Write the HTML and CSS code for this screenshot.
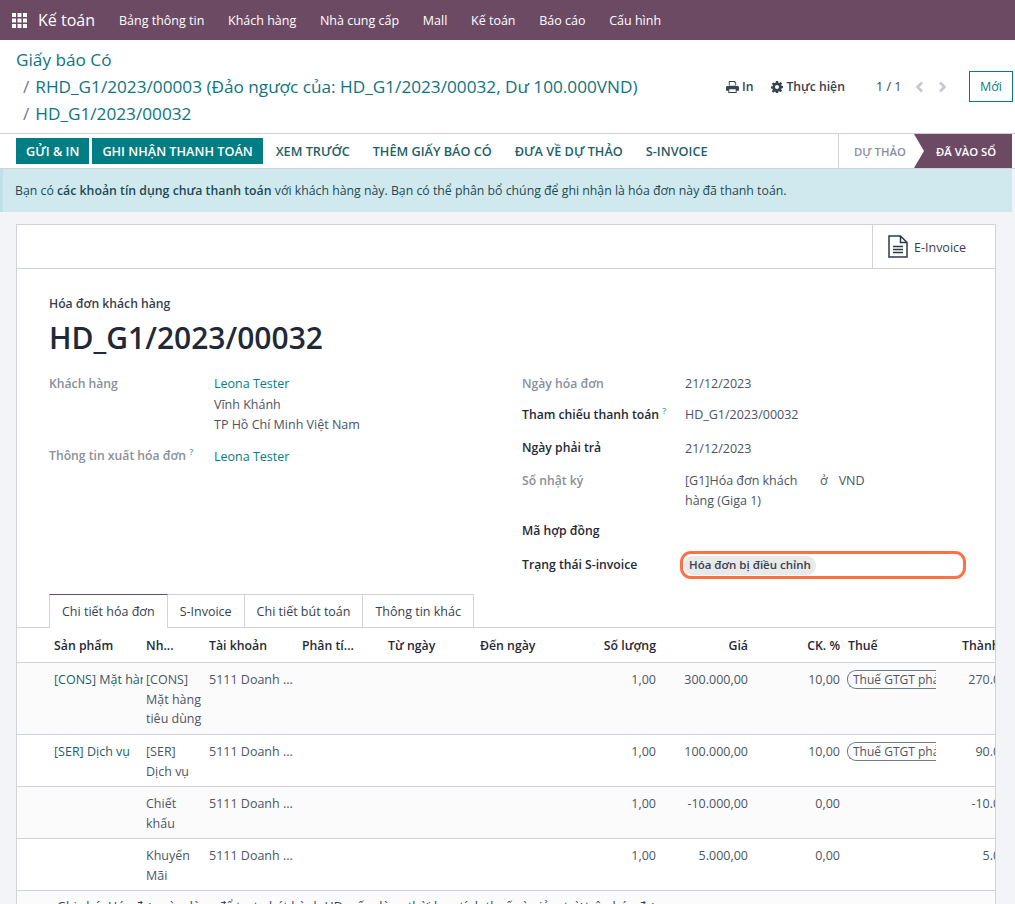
FILE: index.html
```html
<!DOCTYPE html>
<html>
<head>
  <meta charset="utf-8">
  <link rel="stylesheet" href="styles.css">
</head>
<body>
  <nav class="navbar">
    <svg class="apps-icon" width="15" height="15" viewBox="0 0 15 15">
      <path fill="#fff" d="M0 0h4v4H0zM5.500 0h4v4h-4zM11 0h4v4h-4zM0 5.500h4v4H0zM5.500 5.500h4v4h-4zM11 5.500h4v4h-4zM0 11h4v4H0zM5.500 11h4v4h-4zM11 11h4v4h-4z"/>
    </svg>
    <span class="brand">Kế toán</span>
    <a>Bảng thông tin</a>
    <a>Khách hàng</a>
    <a>Nhà cung cấp</a>
    <a>Mall</a>
    <a>Kế toán</a>
    <a>Báo cáo</a>
    <a>Cấu hình</a>
  </nav>

  <header class="control-panel">
    <div class="breadcrumb">
      <div class="crumb">Giấy báo Có</div>
      <div class="crumb sub"><span class="slash">/</span>RHD_G1/2023/00003 (Đảo ngược của: HD_G1/2023/00032, Dư 100.000VND)</div>
      <div class="crumb sub"><span class="slash">/</span>HD_G1/2023/00032</div>
    </div>
    <div class="actions">
      <span class="action">
        <svg width="13" height="12" viewBox="0 0 14 13"><path fill="#374151" d="M3 0h6.500L11 1.500V5H3zM4 1v3.500h6V2H9V1zM1.500 5.500h11c.8 0 1.500.7 1.500 1.500v3.500h-2.500V13h-9v-2.500H0V7c0-.8.7-1.500 1.500-1.500zM3.500 9v3h7V9z"/></svg>
        In
      </span>
      <span class="action">
        <svg width="12" height="12" viewBox="0 0 13 13"><path fill="#374151" fill-rule="evenodd" d="M5.300 0h2.400l.3 1.800 1 .4L10.600 1l1.500 1.500-1.100 1.600.4 1 1.600.3v2.300l-1.700.3-.4 1 1.100 1.500-1.600 1.600-1.500-1.100-1 .4-.3 1.600H5.300L5 11.900l-1-.4L2.500 12.600.9 11l1.100-1.500-.4-1L0 8.200V5.900l1.700-.3.4-1L1 3l1.500-1.500L4 2.200l1-.4zM6.500 4.300a2.200 2.200 0 1 0 0 4.400 2.200 2.200 0 0 0 0-4.400z"/></svg>
        Thực hiện
      </span>
    </div>
    <div class="pager">
      <span>1 / 1</span>
      <svg width="9" height="12" viewBox="0 0 9 12"><path fill="none" stroke="#c5c8ce" stroke-width="2.600" d="M7 1.500 2.500 6 7 10.500"/></svg>
      <svg width="9" height="12" viewBox="0 0 9 12"><path fill="none" stroke="#c5c8ce" stroke-width="2.600" d="M2 1.500 6.500 6 2 10.500"/></svg>
    </div>
    <button class="btn-new">Mới</button>
  </header>

  <div class="statusbar">
    <div class="buttons">
      <button class="btn primary">GỬI &amp; IN</button>
      <button class="btn primary">GHI NHẬN THANH TOÁN</button>
      <button class="btn">XEM TRƯỚC</button>
      <button class="btn">THÊM GIẤY BÁO CÓ</button>
      <button class="btn">ĐƯA VỀ DỰ THẢO</button>
      <button class="btn">S-INVOICE</button>
    </div>
    <div class="stages">
      <span class="stage">DỰ THẢO</span>
      <span class="stage current">ĐÃ VÀO SỔ</span>
    </div>
  </div>

  <div class="alert">Bạn có <b>các khoản tín dụng chưa thanh toán</b> với khách hàng này. Bạn có thể phân bổ chúng để ghi nhận là hóa đơn này đã thanh toán.</div>

  <main class="content">
    <section class="sheet">
      <div class="button-box">
        <div class="stat-button">
          <svg width="20" height="23" viewBox="0 0 20 23"><path fill="none" stroke="#2b3a4a" stroke-width="1.500" d="M1 1h11.500L19 7.500V22H1zM12.500 1v6.500H19M5 11.500h10M5 14.500h10M5 17.500h10"/></svg>
          <span class="stat-text">E-Invoice</span>
        </div>
      </div>

      <div class="sheet-body">
        <div class="doc-type">Hóa đơn khách hàng</div>
        <h1>HD_G1/2023/00032</h1>

        <div class="fields">
          <div class="col col-left">
            <div class="field">
              <label class="muted">Khách hàng</label>
              <div class="value address"><a>Leona Tester</a><span>Vĩnh Khánh</span><span>TP Hồ Chí Minh Việt Nam</span></div>
            </div>
            <div class="field">
              <label class="muted">Thông tin xuất hóa đơn <sup>?</sup></label>
              <div class="value"><a>Leona Tester</a></div>
            </div>
          </div>
          <div class="col col-right">
            <div class="field h-row1">
              <label class="muted">Ngày hóa đơn</label>
              <div class="value">21/12/2023</div>
            </div>
            <div class="field h-row2">
              <label>Tham chiếu thanh toán <sup>?</sup></label>
              <div class="value">HD_G1/2023/00032</div>
            </div>
            <div class="field h-row3">
              <label>Ngày phải trả</label>
              <div class="value">21/12/2023</div>
            </div>
            <div class="field h-row4">
              <label class="muted">Sổ nhật ký</label>
              <div class="value journal">
                <span class="journal-name">[G1]Hóa đơn khách hàng (Giga 1)</span>
                <span class="journal-at">ở</span>
                <span>VND</span>
              </div>
            </div>
            <div class="field h-row5">
              <label>Mã hợp đồng</label>
            </div>
            <div class="field h-row6">
              <label>Trạng thái S-invoice</label>
              <div class="value highlight"><span class="tag">Hóa đơn bị điều chỉnh</span></div>
            </div>
          </div>
        </div>
      </div>

      <div class="tabs">
        <span class="tab active">Chi tiết hóa đơn</span>
        <span class="tab">S-Invoice</span>
        <span class="tab">Chi tiết bút toán</span>
        <span class="tab">Thông tin khác</span>
      </div>

      <table class="lines">
        <colgroup>
          <col class="c-product"><col class="c-label"><col class="c-account"><col class="c-analytic">
          <col class="c-from"><col class="c-to"><col class="c-qty"><col class="c-price">
          <col class="c-disc"><col class="c-tax"><col class="c-total">
        </colgroup>
        <thead>
          <tr>
            <th>Sản phẩm</th><th>Nh...</th><th>Tài khoản</th><th>Phân tí...</th><th>Từ ngày</th><th>Đến ngày</th>
            <th class="num">Số lượng</th><th class="num">Giá</th><th class="num">CK. %</th><th>Thuế</th><th class="num total">Thành tiền</th>
          </tr>
        </thead>
        <tbody>
          <tr>
            <td class="clip">[CONS] Mặt hàng tiêu dùng</td><td>[CONS] Mặt hàng tiêu dùng</td><td>5111 Doanh ...</td><td></td><td></td><td></td>
            <td class="num">1,00</td><td class="num">300.000,00</td><td class="num">10,00</td>
            <td><span class="tax-tag">Thuế GTGT phải thu</span></td><td class="num total">270.000,00</td>
          </tr>
          <tr>
            <td class="clip">[SER] Dịch vụ</td><td>[SER] Dịch vụ</td><td>5111 Doanh ...</td><td></td><td></td><td></td>
            <td class="num">1,00</td><td class="num">100.000,00</td><td class="num">10,00</td>
            <td><span class="tax-tag">Thuế GTGT phải thu</span></td><td class="num total">90.000,00</td>
          </tr>
          <tr>
            <td></td><td>Chiết khấu</td><td>5111 Doanh ...</td><td></td><td></td><td></td>
            <td class="num">1,00</td><td class="num">-10.000,00</td><td class="num">0,00</td>
            <td></td><td class="num total">-10.000,00</td>
          </tr>
          <tr>
            <td></td><td>Khuyến Mãi</td><td>5111 Doanh ...</td><td></td><td></td><td></td>
            <td class="num">1,00</td><td class="num">5.000,00</td><td class="num">0,00</td>
            <td></td><td class="num total">5.000,00</td>
          </tr>
        </tbody>
      </table>
      <p class="note">Ghi chú: Hóa đơn này dùng để test phát hành HD, nếu dùng thời hạn tính thuế và giảm trừ trên hóa đơn</p>
    </section>
  </main>
</body>
</html>
```

FILE: styles.css
```css
html, body {
  margin: 0;
  height: 904px;
  overflow: hidden;
}

body {
  font-family: "Open Sans", "Noto Sans", sans-serif;
  font-size: 12.5px;
  color: #374151;
  background: #f3f4f8;
}

a {
  color: #017e84;
}

/* thanh menu */
.navbar {
  display: flex;
  align-items: center;
  height: 40px;
  padding-left: 12px;
  background: #6d4a64;
  color: #fff;
}

.navbar a {
  color: #fff;
  margin-right: 23.700px;
}

.apps-icon {
  margin-right: 11px;
}

.brand {
  font-size: 16px;
  margin-right: 24px;
}

/* breadcrumb */
.control-panel {
  display: flex;
  height: 94px;
  padding-left: 16px;
  background: #fff;
  border-bottom: 1px solid #d0d3d9;
  box-sizing: border-box;
  align-items: center;
}

.breadcrumb {
  width: 700px;
  font-size: 17.200px;
  line-height: 27px;
}

.crumb {
  color: #0f7480;
}

.crumb.sub {
  padding-left: 7px;
}

.slash {
  color: #71788a;
  margin-right: 6px;
}

.actions {
  display: flex;
  gap: 18px;
  width: 150px;
  font-size: 12.200px;
  font-weight: 600;
  margin-left: 10px;
}

.action {
  display: flex;
  align-items: center;
  gap: 3px;
}

.pager {
  display: flex;
  align-items: center;
  gap: 14px;
  width: 93px;
}

.btn-new {
  width: 44px;
  height: 31px;
  padding: 0;
  font: inherit;
  color: #017e84;
  background: #fff;
  border: 1px solid #017e84;
}

/* hàng nút */
.statusbar {
  display: flex;
  justify-content: space-between;
  height: 35px;
  background: #fff;
  border-bottom: 1px solid #d0d3d9;
  box-sizing: border-box;
  padding-left: 16px;
  padding-right: 3px;
}

.buttons {
  display: flex;
  align-items: center;
  gap: 3px;
}

.btn {
  height: 26px;
  padding: 0 10px;
  border: 0;
  background: none;
  font: inherit;
  font-size: 12.700px;
  font-weight: 600;
  color: #1d5e68;
}

.btn.primary {
  background: #017e84;
  color: #fff;
}

.stages {
  display: flex;
  align-items: stretch;
  border-left: 1px solid #d0d3d9;
  font-size: 11.300px;
  font-weight: 600;
}

.stage {
  display: flex;
  align-items: center;
  width: 75px;
  box-sizing: border-box;
  padding-left: 15px;
  white-space: nowrap;
  color: #8a8f9a;
}

.stage.current {
  width: 98px;
  padding-left: 22px;
  color: #fff;
  background: #6d4a64;
  clip-path: polygon(0 0, 100% 0, 100% 100%, 0 100%, 10px 50%);
}

.alert {
  height: 43px;
  line-height: 44px;
  padding-left: 12px;
  margin-right: 3px;
  color: #1d4a55;
  background: #d0e9ee;
  border-left: 3px solid #bfe0e6;
  font-size: 12.300px;
}

.alert b {
  font-weight: 600;
}

/* phiếu */
.content {
  padding: 12px 19px 0 16px;
}

.sheet {
  background: #fff;
  border: 1px solid #d0d3d9;
  overflow: hidden;
}

.button-box {
  display: flex;
  justify-content: flex-end;
  height: 43px;
  border-bottom: 1px solid #d0d3d9;
}

.stat-button {
  display: flex;
  align-items: center;
  gap: 6px;
  width: 123px;
  box-sizing: border-box;
  padding-left: 15px;
  border-left: 1px solid #d0d3d9;
}

.stat-text {
  padding-top: 1px;
}

.sheet-body {
  padding: 26px 32px 0;
}

.doc-type {
  font-size: 12.200px;
  font-weight: 600;
  line-height: 18px;
}

h1 {
  margin: 4px 0 0;
  font-size: 30px;
  line-height: 41px;
  font-weight: 600;
  color: #1f2937;
}

.fields {
  display: flex;
  margin-top: 15px;
}

.col-left {
  flex: none;
  width: 473px;
}

.col-right {
  flex: none;
  width: 450px;
}

.field {
  display: flex;
  line-height: 21px;
  color: #495464;
}

.field label {
  font-size: 12.200px;
  font-weight: 600;
  color: #1f2937;
}

.field label.muted {
  color: #8a8f9a;
}

sup {
  font-size: 9px;
  color: #4aa8b8;
  line-height: 0;
}

.col-left label {
  width: 165px;
}

.col-right label {
  width: 163px;
}

.col-left .field {
  margin-bottom: 9px;
}

.col-left .value {
  padding-top: 1px;
}

.address {
  display: flex;
  flex-direction: column;
  line-height: 20.500px;
}

.h-row1 { height: 31px; }
.h-row2 { height: 33px; }
.h-row3 { height: 33px; }
.h-row4 { height: 50px; }
.h-row5 { height: 30.500px; }
.h-row6 { height: 28px; align-items: center; }

.h-row3 .value, .h-row4 .value {
  padding-top: 1px;
}

.journal {
  display: flex;
  gap: 15px;
  line-height: 20px;
}

.journal-name {
  width: 120px;
}

.journal-at {
  margin-right: -4px;
}

.highlight {
  width: 286px;
  height: 28px;
  box-sizing: border-box;
  margin-left: -5px;
  padding: 2px 0 0 1px;
  border: 3px solid #ff7043;
  border-radius: 11px;
}

.tag {
  display: inline-block;
  vertical-align: top;
  padding: 0 5px 1px;
  line-height: 18px;
  border-radius: 9px;
  background: #e9e9ea;
  color: #374151;
  font-size: 11.500px;
  font-weight: 600;
}

/* tab */
.tabs {
  display: flex;
  height: 33px;
  margin-top: 15px;
  padding-left: 32px;
  border-bottom: 1px solid #d0d3d9;
}

.tab {
  padding: 0 12px;
  line-height: 33px;
  height: 32px;
  border: 1px solid #d0d3d9;
  border-bottom: 0;
  border-left: 0;
}

.tab.active {
  height: 33px;
  background: #fff;
  border-left: 1px solid #d0d3d9;
  border-top: 1px solid #6d4a64;
}

/* bảng */
.lines {
  width: 1031px;
  border-collapse: collapse;
  table-layout: fixed;
}

.c-product { width: 126px; }
.c-label { width: 60px; }
.c-account { width: 93px; }
.c-analytic { width: 86px; }
.c-from { width: 92px; }
.c-to { width: 92px; }
.c-qty { width: 90px; }
.c-price { width: 92px; }
.c-disc { width: 92px; }
.c-tax { width: 110px; }
.c-total { width: 98px; }

th {
  height: 35px;
  padding: 1px 0 0 6px;
  box-sizing: border-box;
  text-align: left;
  font-size: 12.300px;
  font-weight: 600;
  color: #1f2937;
  white-space: nowrap;
  border-bottom: 1px solid #d0d3d9;
}

td {
  padding: 7px 0 5px 6px;
  line-height: 19.500px;
  vertical-align: top;
  color: #4b5563;
  border-bottom: 1px solid #d0d3d9;
}

tbody tr:first-child td {
  padding-bottom: 5.500px;
}

th:first-child, td:first-child {
  padding-left: 37px;
}

th:nth-child(2), td:nth-child(2) {
  padding-left: 3px;
}

td:nth-child(3) {
  white-space: nowrap;
}

th:nth-child(10) {
  padding-left: 8px;
}

td:nth-child(10) {
  padding-left: 7px;
}

tbody tr:nth-child(odd) {
  background: #fbfbfc;
}

th.num, td.num {
  text-align: right;
}

td.num.total {
  padding-right: 16px;
}

th.num.total {
  text-align: left;
  padding-left: 12px;
}

td.clip {
  white-space: nowrap;
  overflow: hidden;
  color: #1d5e68;
}

.tax-tag {
  display: block;
  width: 89px;
  height: 19px;
  font-size: 12px;
  line-height: 18px;
  box-sizing: border-box;
  padding-left: 5px;
  border: 1px solid #71788a;
  border-right: 0;
  border-radius: 9px 0 0 9px;
  white-space: nowrap;
  overflow: hidden;
}

.note {
  margin: 0;
  padding: 7px 0 0 40px;
  background: #fbfbfc;
  white-space: nowrap;
}
```
